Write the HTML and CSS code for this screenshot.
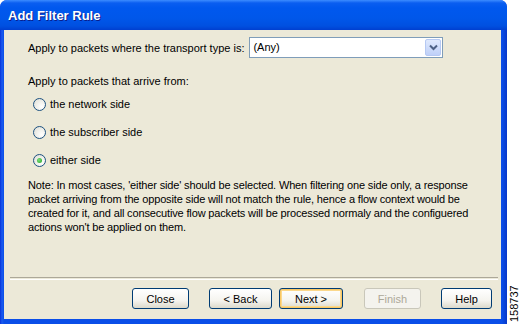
FILE: index.html
```html
<!DOCTYPE html>
<html>
<head>
<meta charset="utf-8">
<link rel="stylesheet" href="styles.css">
</head>
<body>
<div class="page">
  <div class="window">
    <div class="titlebar">Add Filter Rule</div>
    <div class="frame">
      <div class="content">
        <div class="row">
          <span class="label">Apply to packets where the transport type is:</span>
          <div class="select">
            <span class="select-value">(Any)</span>
            <span class="select-btn">
              <svg width="9" height="7" viewBox="0 0 9 7"><path d="M1 1.5 L4.5 5 L8 1.5" fill="none" stroke="#4d6185" stroke-width="2"/></svg>
            </span>
          </div>
        </div>
        <div class="label section">Apply to packets that arrive from:</div>
        <div class="radios">
          <div class="radio-row"><span class="radio"></span><span>the network side</span></div>
          <div class="radio-row"><span class="radio"></span><span>the subscriber side</span></div>
          <div class="radio-row"><span class="radio checked"><span class="dot"></span></span><span>either side</span></div>
        </div>
        <p class="note">Note: In most cases, 'either side' should be selected. When filtering one side only, a response<br>packet arriving from the opposite side will not match the rule, hence a flow context would be<br>created for it, and all consecutive flow packets will be processed normaly and the configuered<br>actions won't be applied on them.</p>
      </div>
      <div class="separator"></div>
      <div class="buttons">
        <button class="btn w-close">Close</button>
        <button class="btn w-back">&lt; Back</button>
        <button class="btn default w-next">Next &gt;</button>
        <button class="btn disabled w-finish">Finish</button>
        <button class="btn w-help">Help</button>
      </div>
    </div>
  </div>
  <div class="side-number">158737</div>
</div>
</body>
</html>
```
FILE: styles.css
```css
html, body {
  margin: 0;
  padding: 0;
  background: #ffffff;
}
body {
  font-family: "Liberation Sans", Arial, sans-serif;
  font-size: 11px;
  color: #000;
}
.page {
  width: 521px;
  height: 324px;
  display: flex;
  overflow: hidden;
}
.window {
  width: 507px;
  height: 324px;
  flex: none;
  display: flex;
  flex-direction: column;
  background: linear-gradient(to right, #0831d9 0, #1a5bf0 2px, #0a4ee8 4px, #0a4ee8 calc(100% - 5px), #0838c8 100%);
  border-radius: 7px 7px 0 0;
  overflow: hidden;
}
.titlebar {
  height: 30px;
  flex: none;
  box-sizing: border-box;
  padding: 8px 0 0 8px;
  color: #fff;
  font-family: "Liberation Sans", Arial, sans-serif;
  font-weight: bold;
  font-size: 13px;
  text-shadow: 1px 1px 0 #0a1e8c;
  background: linear-gradient(to bottom, #3c8cff 0, #0a5ef0 3px, #0058ee 8px, #0057ea 18px, #0050e0 26px, #003fd0 30px);
}
.frame {
  flex: 1;
  margin: 0 6px 5px 4px;
  background: #ece9d8;
  display: flex;
  flex-direction: column;
}
.content {
  flex: 1;
  padding: 7px 0 0 24px;
}
.row {
  display: flex;
  align-items: center;
  gap: 5px;
  height: 21px;
}
.select {
  width: 194px;
  height: 21px;
  box-sizing: border-box;
  border: 1px solid #7f9db9;
  background: #fff;
  display: flex;
  align-items: stretch;
}
.select-value {
  flex: 1;
  padding-left: 3px;
  line-height: 19px;
}
.select-btn {
  width: 16px;
  margin: 1px;
  border-radius: 2px;
  background: linear-gradient(to bottom, #dfe9fd, #bfd0f8);
  border: 1px solid #b6c9f3;
  box-sizing: border-box;
  display: flex;
  align-items: center;
  justify-content: center;
}
.section {
  display: block;
  margin-top: 16px;
  line-height: 14px;
}
.radios {
  display: flex;
  flex-direction: column;
  gap: 14px;
  margin-top: 9px;
  padding-left: 5px;
}
.radio-row {
  display: flex;
  align-items: center;
  gap: 4px;
  height: 14px;
}
.radio {
  width: 13px;
  height: 13px;
  box-sizing: border-box;
  border-radius: 50%;
  border: 1px solid #1c5180;
  background: radial-gradient(circle at 70% 70%, #ffffff 0, #f2f2ee 40%, #dcdcd2 100%);
  display: flex;
  align-items: center;
  justify-content: center;
}
.dot {
  width: 5px;
  height: 5px;
  border-radius: 50%;
  background: radial-gradient(circle at 40% 40%, #7be07b, #21a121);
}
.note {
  margin: 11px 0 0 0;
  line-height: 14px;
  white-space: nowrap;
  letter-spacing: -0.15px;
}
.separator {
  margin: 0 3px 0 6px;
  height: 1px;
  border-top: 1px solid #aca899;
  border-bottom: 1px solid #fff;
}
.buttons {
  display: flex;
  justify-content: flex-end;
  padding: 8px 9px 10px 0;
}
.btn {
  height: 21px;
  box-sizing: border-box;
  font-family: "Liberation Sans", Arial, sans-serif;
  font-size: 11px;
  color: #000;
  border: 1px solid #003c74;
  border-radius: 3px;
  background: linear-gradient(to bottom, #ffffff 0, #f5f4ef 60%, #dcd9cb 100%);
  padding: 0;
}
.btn.default {
  box-shadow: inset 0 0 0 1px #f9c866, inset 0 0 0 2px #fbd88c;
}
.btn.disabled {
  color: #aca899;
  border-color: #c9c7ba;
  background: #f4f3ee;
}
.w-close { width: 57px; }
.w-back { width: 63px; margin-left: 20px; }
.w-next { width: 64px; margin-left: 7px; }
.w-finish { width: 57px; margin-left: 21px; }
.w-help { width: 51px; margin-left: 20px; }
.side-number {
  flex: 1;
  display: flex;
  align-items: center;
  justify-content: flex-start;
  writing-mode: vertical-rl;
  transform: rotate(180deg);
  font-family: "Liberation Sans", Arial, sans-serif;
  font-size: 11px;
  padding-top: 2px;
}
```
